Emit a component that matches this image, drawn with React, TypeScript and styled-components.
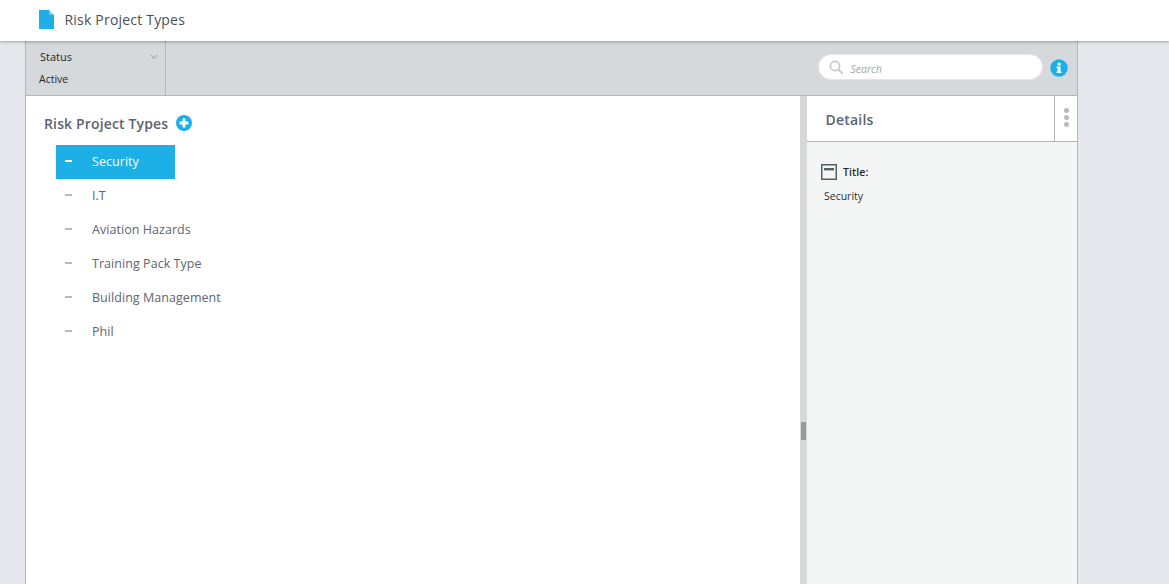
import { createGlobalStyle } from "styled-components"
import styled from "styled-components"

const types = ["Security", "I.T", "Aviation Hazards", "Training Pack Type", "Building Management", "Phil"]

const GlobalStyle = createGlobalStyle`
  html, body {
    margin: 0;
    height: 100%;
    overflow: hidden;
    background: #e4e7eb;
    font-family: "Open Sans", "Liberation Sans", sans-serif;
  }
  #root {
    height: 100%;
  }
  * {
    box-sizing: border-box;
  }
`

const Page = styled.div`
  display: flex;
  flex-direction: column;
  height: 584px;
`

const Header = styled.header`
  height: 41px;
  flex: none;
  display: flex;
  align-items: center;
  padding: 0 0 2px 39px;
  background: white;
  box-shadow: 0 1px 3px rgba(0, 0, 0, 0.3);
  position: relative;
  z-index: 1;
`

const HeaderTitle = styled.h1`
  margin: 0 0 0 10.5px;
  font-size: 14px;
  font-weight: 400;
  color: #4a4f57;
  letter-spacing: 0.2px;
`

const Shell = styled.div`
  flex: 1;
  min-height: 0;
  width: 1053px;
  margin-left: 25px;
  display: flex;
  flex-direction: column;
  border-left: 1px solid #b4b7b9;
  border-right: 1px solid #b4b7b9;
`

const Toolbar = styled.div`
  height: 55px;
  flex: none;
  display: flex;
  align-items: stretch;
  background: #d6d9dc;
  border-bottom: 1px solid #b4b7b9;
`

const StatusCell = styled.div`
  width: 140px;
  padding: 7px 7px 0 13px;
  border-right: 1px solid #b4b7b9;
  font-size: 11px;
  color: #23272b;
`

const StatusRow = styled.div`
  display: flex;
  align-items: center;
  justify-content: space-between;
  height: 16px;
  margin-left: 1px;
`

const StatusChevron = styled.span`
  display: flex;
  margin-top: 2px;
`

const StatusValue = styled.div`
  margin-top: 7px;
  line-height: 16px;
  font-size: 10.5px;
`

const SearchArea = styled.div`
  flex: 1;
  display: flex;
  align-items: center;
  justify-content: flex-end;
  gap: 7px;
  padding: 0 9px 0 0;
`

const SearchBox = styled.div`
  width: 225px;
  height: 26px;
  margin-bottom: 2px;
  display: flex;
  align-items: center;
  gap: 6.5px;
  padding-left: 10px;
  border-radius: 13px;
  background: white;
  border: 1px solid #e4e6e8;
`

const SearchText = styled.span`
  padding-top: 4px;
  font-size: 10.5px;
  font-style: italic;
  color: #a3a7ab;
`

const Main = styled.div`
  flex: 1;
  min-height: 0;
  display: flex;
`

const TreePanel = styled.section`
  flex: 1;
  background: white;
  padding: 17px 0 0 18px;
`

const TreeHeading = styled.div`
  display: flex;
  align-items: center;
  gap: 8px;
  height: 20px;
  font-size: 14px;
  font-weight: 600;
  color: #5d636e;
  letter-spacing: 0.15px;
`

const TreeList = styled.ul`
  list-style: none;
  margin: 12px 0 0 12px;
  padding: 0;
`

const TreeItem = styled.li<{ $active?: boolean }>`
  width: ${(p) => (p.$active ? "119px" : "auto")};
  height: 34px;
  display: flex;
  align-items: center;
  padding: 0 0 2px 9px;
  font-size: 12.5px;
  letter-spacing: 0.05px;
  color: ${(p) => (p.$active ? "white" : "#5f6570")};
  background: ${(p) => (p.$active ? "#1cb0e6" : "transparent")};
`

const Dash = styled.span<{ $active?: boolean }>`
  width: 7px;
  height: 2px;
  margin-right: 20px;
  background: ${(p) => (p.$active ? "white" : "#b2bdbc")};
`

const Splitter = styled.div`
  width: 7px;
  flex: none;
  padding: 326px 1px 0;
  background: #d8d8d8;
`

const SplitterHandle = styled.div`
  height: 18px;
  background: #9a9a9a;
`

const DetailsPanel = styled.aside`
  width: 270px;
  flex: none;
  background: #f4f6f5;
`

const DetailsHeader = styled.div`
  height: 46px;
  display: flex;
  background: white;
  border-bottom: 1px solid #b4b7b9;
`

const DetailsTitle = styled.div`
  flex: 1;
  padding: 2px 0 0 18.5px;
  display: flex;
  align-items: center;
  font-size: 14px;
  font-weight: 600;
  color: #5a6474;
  letter-spacing: 0.2px;
`

const KebabCell = styled.div`
  width: 23px;
  display: flex;
  flex-direction: column;
  align-items: center;
  justify-content: center;
  gap: 2px;
  padding-bottom: 2px;
  border-left: 1px solid #b4b7b9;
`

const KebabDot = styled.span`
  width: 5px;
  height: 5px;
  border-radius: 50%;
  background: #b2bdbc;
`

const DetailsBody = styled.div`
  padding: 21px 0 0 14px;
`

const FieldLabel = styled.div`
  display: flex;
  align-items: center;
  gap: 6px;
  height: 18px;
  font-size: 10.5px;
  font-weight: 600;
  letter-spacing: 0.1px;
  color: #22262a;
`

const FieldValue = styled.div`
  margin: 8px 0 0 3px;
  font-size: 10.5px;
  color: #2b2f33;
`

const FileIcon = () => (
  <svg width="15" height="19" viewBox="0 0 15 19">
    <path d="M0 0H10L15 5V19H0Z" fill="#1cb0e6" />
    <path d="M10.5 0.5L14.5 4.5H10.5Z" fill="#a9e0f5" />
  </svg>
)

const ChevronIcon = () => (
  <svg width="8" height="6" viewBox="0 0 8 6">
    <path d="M0.8 1.2L4 4.4L7.2 1.2" fill="none" stroke="#8d9296" strokeWidth="1" />
  </svg>
)

const SearchIcon = () => (
  <svg width="15" height="15" viewBox="0 0 15 15">
    <circle cx="6" cy="6" r="4.6" fill="none" stroke="#c6c8ca" strokeWidth="1.6" />
    <path d="M9.5 9.5L13.6 13.6" stroke="#c6c8ca" strokeWidth="2" />
  </svg>
)

const InfoIcon = () => (
  <svg width="18" height="18" viewBox="0 0 18 18">
    <circle cx="9" cy="9" r="8.7" fill="#1cb0e6" />
    <rect x="7.6" y="3.8" width="3" height="2.6" rx="0.5" fill="white" />
    <path d="M6.6 7.6H10.5V12.4H11.5V14H6.6V12.4H7.7V9.2H6.6Z" fill="white" />
  </svg>
)

const PlusIcon = () => (
  <svg width="16" height="16" viewBox="0 0 16 16">
    <circle cx="8" cy="8" r="8" fill="#1cb0e6" />
    <path d="M8 3.6V12.4M3.6 8H12.4" stroke="white" strokeWidth="2.8" />
  </svg>
)

const TitleFieldIcon = () => (
  <svg width="16" height="16" viewBox="0 0 16 16">
    <rect x="0.75" y="0.75" width="14.5" height="14.5" fill="none" stroke="#566164" strokeWidth="1.5" />
    <rect x="3" y="4" width="10" height="2.4" fill="#566164" />
  </svg>
)

export default function App() {
  return (
    <Page>
      <GlobalStyle />
      <Header>
        <FileIcon />
        <HeaderTitle>Risk Project Types</HeaderTitle>
      </Header>
      <Shell>
        <Toolbar>
          <StatusCell>
            <StatusRow>
              Status
              <StatusChevron>
                <ChevronIcon />
              </StatusChevron>
            </StatusRow>
            <StatusValue>Active</StatusValue>
          </StatusCell>
          <SearchArea>
            <SearchBox>
              <SearchIcon />
              <SearchText>Search</SearchText>
            </SearchBox>
            <InfoIcon />
          </SearchArea>
        </Toolbar>
        <Main>
          <TreePanel>
            <TreeHeading>
              Risk Project Types
              <PlusIcon />
            </TreeHeading>
            <TreeList>
              {types.map((t, i) => (
                <TreeItem key={t} $active={i === 0}>
                  <Dash $active={i === 0} />
                  {t}
                </TreeItem>
              ))}
            </TreeList>
          </TreePanel>
          <Splitter>
            <SplitterHandle />
          </Splitter>
          <DetailsPanel>
            <DetailsHeader>
              <DetailsTitle>Details</DetailsTitle>
              <KebabCell>
                <KebabDot />
                <KebabDot />
                <KebabDot />
              </KebabCell>
            </DetailsHeader>
            <DetailsBody>
              <FieldLabel>
                <TitleFieldIcon />
                Title:
              </FieldLabel>
              <FieldValue>Security</FieldValue>
            </DetailsBody>
          </DetailsPanel>
        </Main>
      </Shell>
    </Page>
  )
}
